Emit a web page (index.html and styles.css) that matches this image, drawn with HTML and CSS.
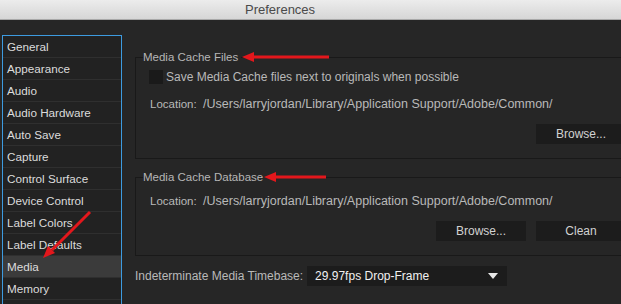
FILE: index.html
```html
<!DOCTYPE html>
<html lang="en">
<head>
    <meta charset="UTF-8">
    <title>Preferences</title>
    <link rel="stylesheet" href="styles.css">
</head>
<body>
    <div class="titlebar">Preferences</div>

    <div class="window">
        <ul class="sidebar">
            <li>General</li>
            <li>Appearance</li>
            <li>Audio</li>
            <li>Audio Hardware</li>
            <li>Auto Save</li>
            <li>Capture</li>
            <li>Control Surface</li>
            <li>Device Control</li>
            <li>Label Colors</li>
            <li>Label Defaults</li>
            <li class="active">Media</li>
            <li>Memory</li>
        </ul>

        <div class="panel">
            <fieldset class="group group-files">
                <legend>Media Cache Files</legend>
                <label class="check-row">
                    <span class="checkbox"></span>
                    Save Media Cache files next to originals when possible
                </label>
                <p class="location">Location:&nbsp; <span class="path">/Users/larryjordan/Library/Application Support/Adobe/Common/</span></p>
                <div class="buttons">
                    <button>Browse...</button>
                </div>
            </fieldset>

            <fieldset class="group group-db">
                <legend>Media Cache Database</legend>
                <p class="location">Location:&nbsp; <span class="path">/Users/larryjordan/Library/Application Support/Adobe/Common/</span></p>
                <div class="buttons">
                    <button>Browse...</button>
                    <button>Clean</button>
                </div>
            </fieldset>

            <div class="timebase">
                <span class="timebase-label">Indeterminate Media Timebase:</span>
                <div class="select">
                    <span>29.97fps Drop-Frame</span>
                    <span class="caret"></span>
                </div>
            </div>
        </div>
    </div>

    <!-- red callout arrows -->
    <svg class="arrows" width="621" height="304" viewBox="0 0 621 304">
        <g stroke="#e3171c" stroke-width="3" fill="#e3171c">
            <line x1="329" y1="57" x2="251" y2="57"/>
            <polygon stroke="none" points="242,57 254,52 254,62"/>
            <line x1="326" y1="177" x2="273" y2="177"/>
            <polygon stroke="none" points="264,177 276,172 276,182"/>
            <line x1="90" y1="212" x2="52" y2="250"/>
            <polygon stroke="none" points="43,258 55,253 48,246"/>
        </g>
    </svg>
</body>
</html>
```

FILE: styles.css
```css
* {
    margin: 0;
    padding: 0;
    box-sizing: border-box;
}

body {
    width: 621px;
    height: 304px;
    overflow: hidden;
    position: relative;
    background: #262626;
    font-family: 'Liberation Sans', Arial, sans-serif;
    font-size: 11px;
    color: #b9b9b9;
}

.titlebar {
    height: 20px;
    padding-left: 245px;
    line-height: 19px;
    font-size: 13px;
    color: #4a4a4a;
    background: linear-gradient(#ececec, #d6d6d6);
    border-bottom: 1px solid #a8a8a8;
}

.window {
    display: flex;
    align-items: flex-start;
}

/* Category list */
.sidebar {
    flex-shrink: 0;
    list-style: none;
    width: 120px;
    height: 269px;
    margin: 15px 0 0 2px;
    background: #222;
    border: 1px solid #3d9be0;
    border-bottom: none;
}

.sidebar li {
    height: 22px;
    padding-left: 4px;
    line-height: 21px;
    font-size: 11.7px;
    color: #dcdcdc;
    border-bottom: 1px solid #2f2f2f;
}

.sidebar li.active {
    background: #3b3b3b;
}

/* Right side */
.panel {
    flex-shrink: 0;
    width: 505px;
    margin: 30px 0 0 13px;
    display: flex;
    flex-direction: column;
}

.group {
    border: 1px solid #191919;
    padding: 0 13px 14px 7px;
}

.group legend {
    height: 14px;
    line-height: 14px;
    padding-right: 3px;
    font-size: 11.5px;
    color: #b6b6b6;
}

.group-db {
    margin-top: 11px;
}

.check-row {
    display: flex;
    align-items: center;
    gap: 3px;
    margin: 6px 0 0 6px;
    height: 14px;
    font-size: 12px;
}

.checkbox {
    width: 14px;
    height: 14px;
    background: #1a1a1a;
}

.location {
    height: 14px;
    margin: 13px 0 0 7px;
    line-height: 14px;
    font-size: 11.5px;
}

.path {
    font-size: 12.5px;
}

.group-db .location {
    margin-top: 10px;
}

.buttons {
    display: flex;
    justify-content: flex-end;
    gap: 10px;
    margin-top: 13px;
}

button {
    width: 90px;
    height: 20px;
    border: none;
    background: #1c1c1c;
    font-family: inherit;
    font-size: 12px;
    color: #d2d2d2;
}

.timebase {
    display: flex;
    align-items: center;
    margin-top: 10px;
    font-size: 12px;
}

.select {
    width: 200px;
    height: 20px;
    margin-left: 4px;
    padding: 0 9px 0 8px;
    display: flex;
    align-items: center;
    justify-content: space-between;
    background: #1c1c1c;
    color: #f0f0f0;
}

.caret {
    width: 0;
    height: 0;
    border-left: 5px solid transparent;
    border-right: 5px solid transparent;
    border-top: 6px solid #e8e8e8;
}

.arrows {
    position: absolute;
    top: 0;
    left: 0;
    pointer-events: none;
}
```
